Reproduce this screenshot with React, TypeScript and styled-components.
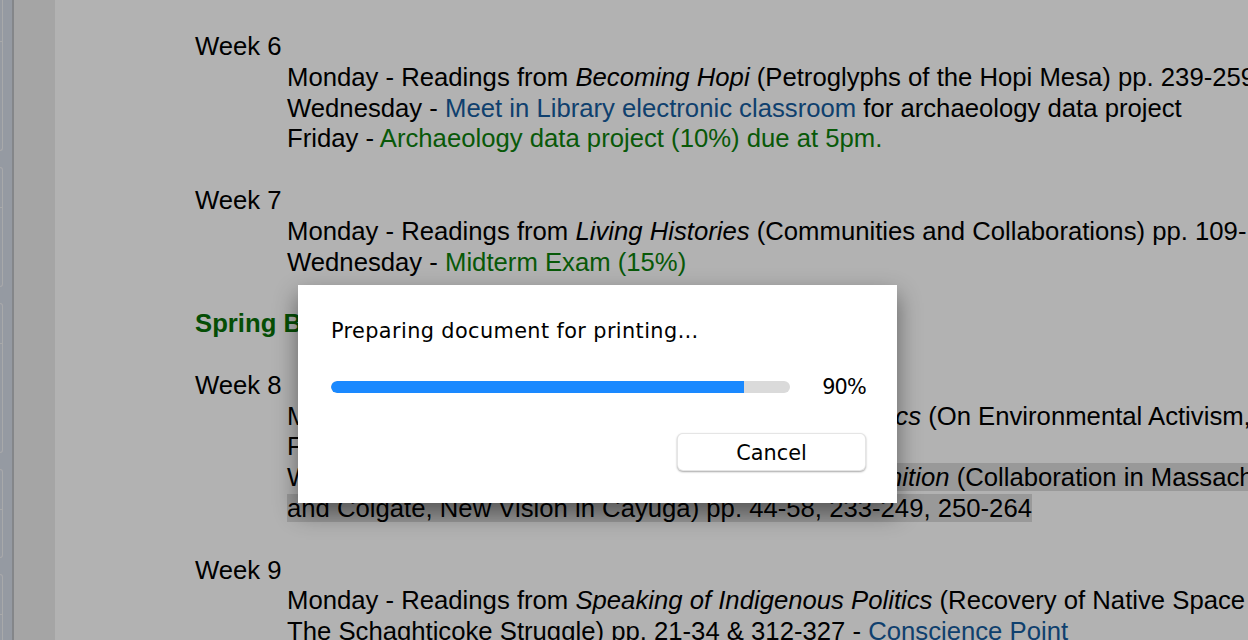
import styled, { createGlobalStyle } from 'styled-components';

const GlobalStyle = createGlobalStyle`
  html, body {
    margin: 0;
    padding: 0;
    overflow: hidden;
  }
`;

const Window = styled.div`
  position: relative;
  display: flex;
  width: 1248px;
  height: 640px;
  overflow: hidden;
  background: #ffffff;
`;

const TabRail = styled.div`
  display: flex;
  flex-direction: column;
  gap: 16px;
  width: 12px;
  flex-shrink: 0;
  background: #d6dde9;
`;

const RailTab = styled.div<{ $h: number; $cut?: boolean }>`
  position: relative;
  flex-shrink: 0;
  width: 2px;
  height: ${(p) => p.$h}px;
  border: 1px solid #f1f2f4;
  border-left: none;
  border-radius: ${(p) => (p.$cut ? '0 0 5px 0' : '0 5px 5px 0')};
  ${(p) => (p.$cut ? 'border-top: none;' : '')}

  &::after {
    content: '';
    position: absolute;
    left: 0;
    top: ${(p) => (p.$cut ? 41 : 39)}px;
    width: 3px;
    height: 1px;
    background: #f1f2f4;
  }
`;

const Divider = styled.div`
  width: 2px;
  flex-shrink: 0;
  background: #bec1c5;
`;

const Sidebar = styled.div`
  width: 41px;
  flex-shrink: 0;
  background: #ececec;
`;

const Page = styled.div`
  flex: 1;
  min-width: 0;
  padding: 31px 0 0 140px;
  font-family: 'Liberation Sans', Arial, Helvetica, sans-serif;
  font-size: 25.7px;
  line-height: 30.8px;
  color: #000000;
  white-space: nowrap;
  overflow: hidden;
`;

const Section = styled.div`
  margin-bottom: 30.8px;
`;

const Week = styled.div``;

const Heading = styled.div`
  font-weight: bold;
  color: #087008;
`;

const Entry = styled.div`
  padding-left: 92px;
`;

const Title = styled.i``;

const Link = styled.span`
  color: #165c9e;
`;

const Due = styled.span`
  color: #0c800c;
`;

const Selected = styled.span`
  background: #dcdcdc;
`;

const Dim = styled.div`
  position: absolute;
  inset: 0;
  background: rgba(0, 0, 0, 0.3);
`;

const Sheet = styled.div`
  position: absolute;
  left: 298px;
  top: 285px;
  width: 599px;
  height: 218px;
  box-sizing: border-box;
  padding: 34px 31px 0 33px;
  background: #ffffff;
  box-shadow: 0 10px 22px rgba(0, 0, 0, 0.45);
  font-family: 'DejaVu Sans', 'Lucida Grande', sans-serif;
  font-size: 20.8px;
  color: #000000;
`;

const Message = styled.div`
  line-height: 24px;
  letter-spacing: 0.4px;
`;

const ProgressRow = styled.div`
  display: flex;
  align-items: center;
  justify-content: space-between;
  height: 24px;
  margin-top: 32px;
`;

const Track = styled.div`
  width: 459px;
  height: 12px;
  border-radius: 6px;
  background: #dadada;
  overflow: hidden;
`;

const Fill = styled.div`
  height: 100%;
  border-radius: 6px 0 0 6px;
  background: #1a89ff;
`;

const Percent = styled.span`
  line-height: 24px;
  letter-spacing: -0.8px;
`;

const Actions = styled.div`
  display: flex;
  justify-content: flex-end;
  margin-top: 34px;
`;

const Button = styled.button`
  width: 189px;
  height: 38px;
  border: 1px solid rgba(0, 0, 0, 0.1);
  border-radius: 6px;
  background: #ffffff;
  box-shadow: 0 1px 2px rgba(0, 0, 0, 0.35);
  font-family: 'DejaVu Sans', 'Lucida Grande', sans-serif;
  font-size: 20.8px;
  color: #000000;
  padding: 2px 0 0;
`;

const progress = 90;

export default function App() {
  return (
    <Window>
      <GlobalStyle />
      <TabRail>
        <RailTab $h={150} $cut />
        <RailTab $h={118} />
        <RailTab $h={148} />
        <RailTab $h={87} />
        <RailTab $h={120} />
      </TabRail>
      <Divider />
      <Sidebar />
      <Page>
        <Section>
          <Week>Week 6</Week>
          <Entry>
            Monday - Readings from <Title>Becoming Hopi</Title> (Petroglyphs of the Hopi Mesa) pp. 239-259
          </Entry>
          <Entry>
            Wednesday - <Link>Meet in Library electronic classroom</Link> for archaeology data project
          </Entry>
          <Entry>
            Friday - <Due>Archaeology data project (10%) due at 5pm.</Due>
          </Entry>
        </Section>
        <Section>
          <Week>Week 7</Week>
          <Entry>
            Monday - Readings from <Title>Living Histories</Title> (Communities and Collaborations) pp. 109-125
          </Entry>
          <Entry>
            Wednesday - <Due>Midterm Exam (15%)</Due>
          </Entry>
        </Section>
        <Section>
          <Heading>Spring Break</Heading>
        </Section>
        <Section>
          <Week>Week 8</Week>
          <Entry>
            Monday - Readings from <Title>Speaking of Indigenous Ethics</Title> (On Environmental Activism, Ramapough Lenape)
          </Entry>
          <Entry>Friday - No class</Entry>
          <Entry>
            Wednesday - Readings from{' '}
            <Selected>
              <Title>Native American Recognition</Title> (Collaboration in Massachusetts
            </Selected>
          </Entry>
          <Entry>
            <Selected>and Colgate, New Vision in Cayuga) pp. 44-58, 233-249, 250-264</Selected>
          </Entry>
        </Section>
        <Section>
          <Week>Week 9</Week>
          <Entry>
            Monday - Readings from <Title>Speaking of Indigenous Politics</Title> (Recovery of Native Space in
          </Entry>
          <Entry>
            The Schaghticoke Struggle) pp. 21-34 &amp; 312-327 - <Link>Conscience Point</Link>
          </Entry>
        </Section>
      </Page>
      <Dim />
      <Sheet>
        <Message>Preparing document for printing…</Message>
        <ProgressRow>
          <Track>
            <Fill style={{ width: `${progress}%` }} />
          </Track>
          <Percent>{progress}%</Percent>
        </ProgressRow>
        <Actions>
          <Button>Cancel</Button>
        </Actions>
      </Sheet>
    </Window>
  );
}
